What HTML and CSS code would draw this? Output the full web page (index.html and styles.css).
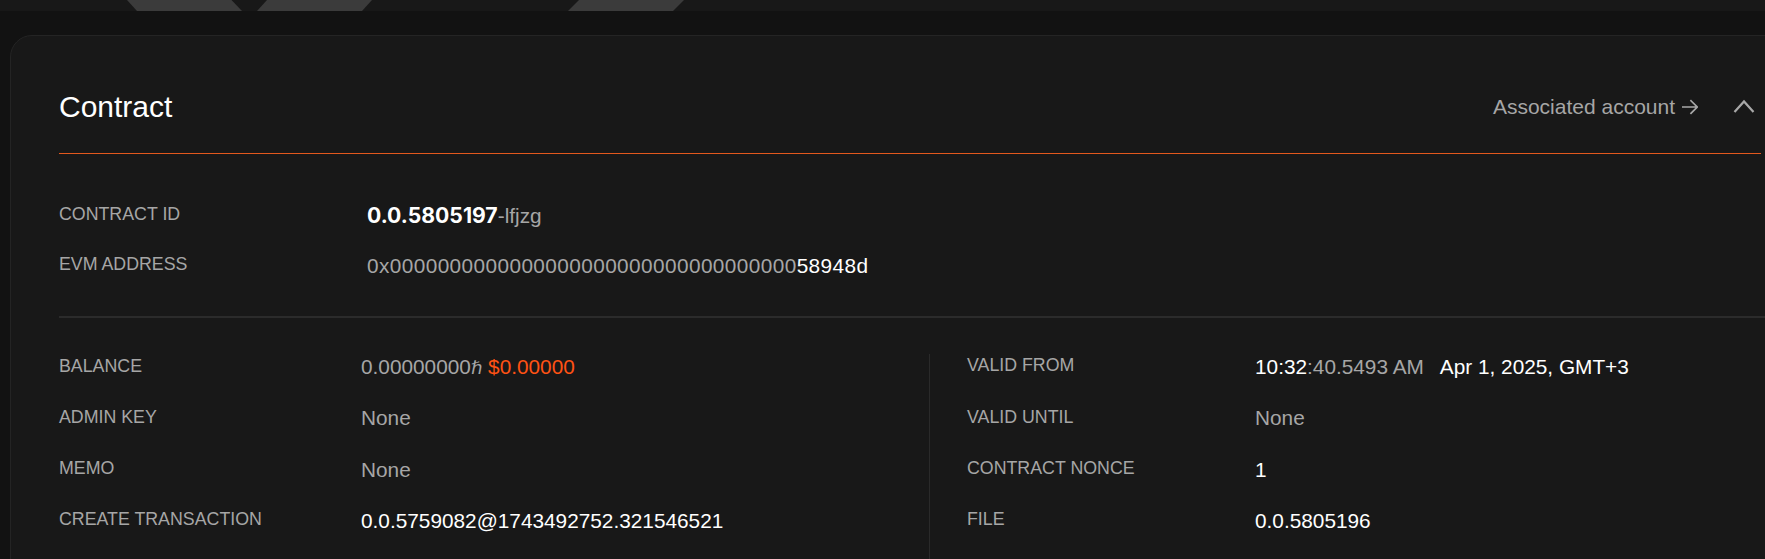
FILE: index.html
```html
<!DOCTYPE html>
<html lang="en">
<head>
<meta charset="utf-8">
<title>Contract</title>
<link rel="stylesheet" href="styles.css">
</head>
<body>
<div class="topbar">
  <div class="tab tab-a"></div>
  <div class="tab tab-b"></div>
  <div class="tab tab-c"></div>
</div>
<main class="page">
  <section class="card">
    <header class="card-header">
      <h2 class="card-title">Contract</h2>
      <div class="card-actions">
        <a class="assoc-link">Associated account
          <svg class="arrow-icon" width="16" height="16" viewBox="0 0 16 16" aria-hidden="true"><path d="M0.5 8 H15 M9 1.8 L15.2 8 L9 14.2" fill="none" stroke="currentColor" stroke-width="1.7" stroke-linecap="square"/></svg>
        </a>
        <button class="collapse-btn" aria-label="Collapse">
          <svg width="24" height="24" viewBox="0 0 24 24" aria-hidden="true"><path d="M2.5 17 L12 6.5 L21.5 17" fill="none" stroke="currentColor" stroke-width="2.2"/></svg>
        </button>
      </div>
    </header>

    <div class="card-body">
      <div class="top-section">
        <div class="row row-top">
          <div class="label">CONTRACT ID</div>
          <div class="value"><span class="entity-id">0.0.5805197</span><span class="checksum">-lfjzg</span></div>
        </div>
        <div class="row row-top">
          <div class="label">EVM ADDRESS</div>
          <div class="value address"><span class="muted">0x0000000000000000000000000000000000</span><span class="bright">58948d</span></div>
        </div>
      </div>

      <div class="divider"></div>

      <div class="columns">
        <div class="col col-left">
          <div class="row row-left">
            <div class="label">BALANCE</div>
            <div class="value"><span class="muted">0.00000000<span class="hbar">ℏ</span></span> <span class="usd">$0.00000</span></div>
          </div>
          <div class="row row-left">
            <div class="label">ADMIN KEY</div>
            <div class="value muted">None</div>
          </div>
          <div class="row row-left">
            <div class="label">MEMO</div>
            <div class="value muted">None</div>
          </div>
          <div class="row row-left">
            <div class="label">CREATE TRANSACTION</div>
            <div class="value bright">0.0.5759082@1743492752.321546521</div>
          </div>
        </div>
        <div class="col col-right">
          <div class="row row-right">
            <div class="label">VALID FROM</div>
            <div class="value"><span class="bright">10:32</span><span class="muted">:40.5493 AM</span><span class="bright date">Apr 1, 2025, GMT+3</span></div>
          </div>
          <div class="row row-right">
            <div class="label">VALID UNTIL</div>
            <div class="value muted">None</div>
          </div>
          <div class="row row-right">
            <div class="label">CONTRACT NONCE</div>
            <div class="value bright">1</div>
          </div>
          <div class="row row-right">
            <div class="label">FILE</div>
            <div class="value bright">0.0.5805196</div>
          </div>
        </div>
      </div>
    </div>
  </section>
</main>
</body>
</html>
```

FILE: styles.css
```css
html, body {
  margin: 0;
  padding: 0;
}

body {
  background: #121212;
  font-family: "Liberation Sans", Arial, sans-serif;
  color: #a6a6a6;
  height: 559px;
  overflow: hidden;
}

/* top strip with tab shapes */
.topbar {
  height: 11px;
  background: #181818;
  display: flex;
  padding-left: 127px;
}

.tab {
  height: 11px;
  background: #3b3b3b;
  flex: none;
}

.tab-a {
  width: 115px;
  clip-path: polygon(0 0, 104.5px 0, 115px 100%, 10px 100%);
}

.tab-b {
  width: 115px;
  margin-left: 15px;
  clip-path: polygon(10px 0, 115px 0, 105px 100%, 0 100%);
}

.tab-c {
  width: 116px;
  margin-left: 196px;
  clip-path: polygon(11px 0, 116px 0, 105px 100%, 0 100%);
}

/* page + card */
.page {
  padding: 24px 0 0 10px;
}

.card {
  width: 1800px;
  box-sizing: border-box;
  min-height: 640px;
  background: #181818;
  border: 1px solid #242424;
  border-radius: 22px;
  padding: 0 48px;
}

.card-header {
  display: flex;
  align-items: center;
  justify-content: space-between;
  padding: 53px 0 28px;
  border-bottom: 1px solid #e2581d;
}

.card-title {
  margin: 0;
  font-size: 30px;
  line-height: 36px;
  font-weight: 400;
  color: #ffffff;
}

.card-actions {
  display: flex;
  align-items: center;
  padding-right: 5px;
}

.assoc-link {
  display: flex;
  align-items: center;
  gap: 7px;
  font-size: 21px;
  line-height: 26px;
  color: #a6a6a6;
  text-decoration: none;
}

.arrow-icon {
  display: block;
  color: #a8a8a8;
}

.collapse-btn {
  margin-left: 34px;
  padding: 0;
  border: 0;
  background: none;
  color: #a8a8a8;
  width: 24px;
  height: 24px;
}

.collapse-btn svg {
  display: block;
}

/* body */
.top-section {
  padding-top: 47.6px;
  display: flex;
  flex-direction: column;
  gap: 25.33px;
}

.row {
  display: grid;
  align-items: center;
  height: 26px;
}

.row-top {
  grid-template-columns: 308px 1fr;
}

.row-left {
  grid-template-columns: 302px 1fr;
}

.row-right {
  grid-template-columns: 288px 1fr;
}

.label {
  font-size: 17.8px;
  line-height: 20px;
  color: #a6a6a6;
  padding-bottom: 3px;
  white-space: nowrap;
}

.value {
  font-size: 20.8px;
  line-height: 26px;
  white-space: nowrap;
}

.address {
  letter-spacing: 0.4px;
}

.muted {
  color: #a6a6a6;
}

.bright {
  color: #ffffff;
}

.entity-id {
  font-family: Inter, "Liberation Sans", sans-serif;
  font-weight: 700;
  font-size: 21.2px;
  color: #ffffff;
}

.checksum {
  color: #a6a6a6;
}

.hbar {
  font-family: "DejaVu Sans", sans-serif;
  font-size: 18px;
}

.usd {
  color: #ff5214;
}

.date {
  margin-left: 16px;
}

.divider {
  height: 2px;
  background: #2b2b2b;
  margin: 37px -48px 0 0;
}

.columns {
  display: flex;
  margin-top: 36px;
}

.col {
  display: flex;
  flex-direction: column;
  gap: 25.33px;
  padding-bottom: 60px;
}

.col-left {
  width: 870px;
  flex: none;
}

.col-right {
  flex: 1;
  border-left: 1px solid #2a2a2a;
  padding-left: 37px;
}
```
